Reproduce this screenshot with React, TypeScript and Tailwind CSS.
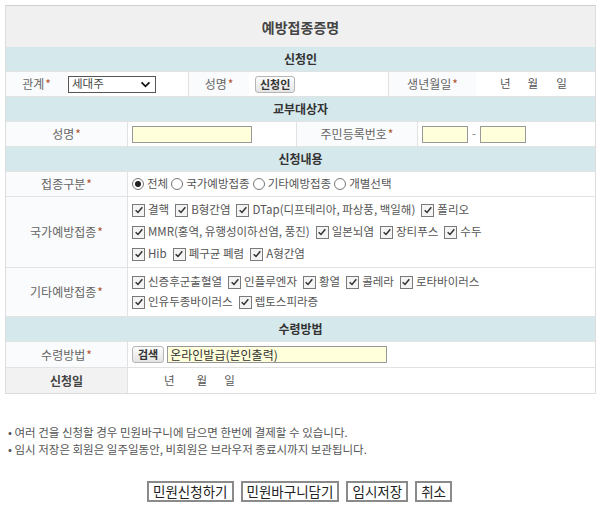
import React from 'react';

const Star = () => <span className="ml-[1px] text-[#b0552d]">*</span>;

function Check({ label }: { label: string }) {
    return (
        <span className="inline-flex items-center mr-[6px] whitespace-nowrap">
            <span className="mr-[3px] flex h-[13px] w-[13px] items-center justify-center border border-[#7a7a7a] bg-[#f4f4f4]">
                <svg viewBox="0 0 12 12" className="h-[10px] w-[10px]">
                    <path d="M2 6.2 L4.8 9 L10 2.6" fill="none" stroke="#333" strokeWidth="1.8" />
                </svg>
            </span>
            {label}
        </span>
    );
}

function Radio({ label, on }: { label: string; on?: boolean }) {
    return (
        <span className="inline-flex items-center mr-[3px] whitespace-nowrap">
            <span className="mr-[3px] flex h-[12px] w-[12px] items-center justify-center rounded-full border border-[#777] bg-white">
                {on && <span className="h-[6px] w-[6px] rounded-full bg-[#222]" />}
            </span>
            {label}
        </span>
    );
}

function Header({ children }: { children: React.ReactNode }) {
    return (
        <div className="flex h-[25px] items-center justify-center border-b border-[#e2e2e2] bg-[#d5e8eb] text-[12px] font-bold text-[#333]">
            {children}
        </div>
    );
}

const label = "flex items-center justify-center bg-[#fafbfc] text-[12px] text-[#666]";

export default function App() {
    return (
        <div className="w-[600px] h-[507px] bg-white font-['Noto_Sans_CJK_KR',sans-serif] text-[11.5px] text-[#555] leading-none">
            <div className="pt-[5px] px-[5px]">
                <div className="border border-[#dcdcdc] border-t-[#cfcfcf] w-[591px]">
                    {/* title */}
                    <div className="flex h-[41px] items-center justify-center bg-[#f0f0f0] text-[14px] font-bold text-[#444]">
                        예방접종증명
                    </div>

                    <Header>신청인</Header>
                    <div className="flex h-[25px] border-b border-[#e2e2e2]">
                        <div className={`${label} w-[61px]`}>관계<Star /></div>
                        <div className="flex w-[122px] items-center pl-[1px] border-r border-[#e2e2e2]">
                            <div className="flex h-[17px] w-[88px] items-center justify-between border border-[#555] bg-white pl-[3px] pr-[4px] text-[#444]">
                                <span>세대주</span>
                                <svg viewBox="0 0 12 8" className="h-[7px] w-[11px]">
                                    <path d="M1.5 1.5 L6 6 L10.5 1.5" fill="none" stroke="#111" strokeWidth="2" />
                                </svg>
                            </div>
                        </div>
                        <div className={`${label} w-[60px]`}>성명<Star /></div>
                        <div className="flex w-[140px] items-center pl-[6px] border-r border-[#e2e2e2]">
                            <button className="h-[17px] rounded-[3px] border border-[#b5b5b5] bg-gradient-to-b from-[#fdfdfd] to-[#e4e4e4] px-[4px] text-[11px] font-bold text-[#333]">
                                신청인
                            </button>
                        </div>
                        <div className={`${label} w-[87px]`}>생년월일<Star /></div>
                        <div className="flex flex-1 items-center pl-[24px] text-[#555]">
                            <span>년</span>
                            <span className="ml-[17px]">월</span>
                            <span className="ml-[18px]">일</span>
                        </div>
                    </div>

                    <Header>교부대상자</Header>
                    <div className="flex h-[25px] border-b border-[#e2e2e2]">
                        <div className={`${label} w-[122px] border-r border-[#e2e2e2]`}>성명<Star /></div>
                        <div className="flex w-[169px] items-center pl-[4px] border-r border-[#e2e2e2]">
                            <div className="h-[17px] w-[120px] border border-[#999] bg-[#ffffdc]" />
                        </div>
                        <div className={`${label} w-[121px] border-r border-[#e2e2e2]`}>주민등록번호<Star /></div>
                        <div className="flex flex-1 items-center pl-[4px]">
                            <div className="h-[17px] w-[46px] border border-[#999] bg-[#ffffdc]" />
                            <span className="mx-[4px] text-[#777]">-</span>
                            <div className="h-[17px] w-[46px] border border-[#999] bg-[#ffffdc]" />
                        </div>
                    </div>

                    <Header>신청내용</Header>
                    <div className="flex h-[25px] border-b border-[#e2e2e2]">
                        <div className={`${label} w-[122px] border-r border-[#e2e2e2]`}>접종구분<Star /></div>
                        <div className="flex flex-1 items-center pl-[4px]">
                            <Radio label="전체" on />
                            <Radio label="국가예방접종" />
                            <Radio label="기타예방접종" />
                            <Radio label="개별선택" />
                        </div>
                    </div>
                    <div className="flex h-[71px] border-b border-[#e2e2e2]">
                        <div className={`${label} w-[122px] border-r border-[#e2e2e2]`}>국가예방접종<Star /></div>
                        <div className="flex flex-1 flex-col justify-center gap-[9px] pl-[4px]">
                            <div className="flex items-center">
                                <Check label="결핵" />
                                <Check label="B형간염" />
                                <Check label="DTap(디프테리아, 파상풍, 백일해)" />
                                <Check label="폴리오" />
                            </div>
                            <div className="flex items-center">
                                <Check label="MMR(홍역, 유행성이하선염, 풍진)" />
                                <Check label="일본뇌염" />
                                <Check label="장티푸스" />
                                <Check label="수두" />
                            </div>
                            <div className="flex items-center">
                                <Check label="Hib" />
                                <Check label="폐구균 폐렴" />
                                <Check label="A형간염" />
                            </div>
                        </div>
                    </div>
                    <div className="flex h-[49px] border-b border-[#e2e2e2]">
                        <div className={`${label} w-[122px] border-r border-[#e2e2e2]`}>기타예방접종<Star /></div>
                        <div className="flex flex-1 flex-col justify-center gap-[7px] pl-[4px]">
                            <div className="flex items-center">
                                <Check label="신증후군출혈열" />
                                <Check label="인플루엔자" />
                                <Check label="황열" />
                                <Check label="콜레라" />
                                <Check label="로타바이러스" />
                            </div>
                            <div className="flex items-center">
                                <Check label="인유두종바이러스" />
                                <Check label="렙토스피라증" />
                            </div>
                        </div>
                    </div>

                    <Header>수령방법</Header>
                    <div className="flex h-[26px] border-b border-[#e2e2e2]">
                        <div className={`${label} w-[122px] border-r border-[#e2e2e2]`}>수령방법<Star /></div>
                        <div className="flex flex-1 items-center pl-[4px]">
                            <button className="h-[17px] rounded-[3px] border border-[#b5b5b5] bg-gradient-to-b from-[#fdfdfd] to-[#e4e4e4] px-[5px] text-[11px] font-bold text-[#333]">
                                검색
                            </button>
                            <div className="ml-[3px] flex h-[17px] w-[220px] items-center border border-[#999] bg-[#ffffdc] pl-[2px] text-[12px] text-[#333]">
                                온라인발급(본인출력)
                            </div>
                        </div>
                    </div>
                    <div className="flex h-[25px]">
                        <div className="flex w-[122px] items-center justify-center border-r border-[#e2e2e2] bg-[#f2f2f2] text-[12px] font-bold text-[#444]">
                            신청일
                        </div>
                        <div className="flex flex-1 items-center pl-[36px]">
                            <span>년</span>
                            <span className="ml-[22px]">월</span>
                            <span className="ml-[17px]">일</span>
                        </div>
                    </div>
                </div>
            </div>

            <ul className="mt-[33px] pl-[8px] text-[11.5px] text-[#555] flex flex-col gap-[5px]">
                <li>• 여러 건을 신청할 경우 민원바구니에 담으면 한번에 결제할 수 있습니다.</li>
                <li>• 임시 저장은 회원은 일주일동안, 비회원은 브라우저 종료시까지 보관됩니다.</li>
            </ul>

            <div className="mt-[26px] flex justify-center gap-[7px] pr-[1px] text-[13.5px] text-[#222]">
                <button className="h-[21px] border-2 border-[#8a8a8a] px-[4px]">민원신청하기</button>
                <button className="h-[21px] border-2 border-[#8a8a8a] px-[4px]">민원바구니담기</button>
                <button className="h-[21px] border-2 border-[#8a8a8a] px-[4px]">임시저장</button>
                <button className="h-[21px] border-2 border-[#8a8a8a] px-[4px]">취소</button>
            </div>
        </div>
    );
}
